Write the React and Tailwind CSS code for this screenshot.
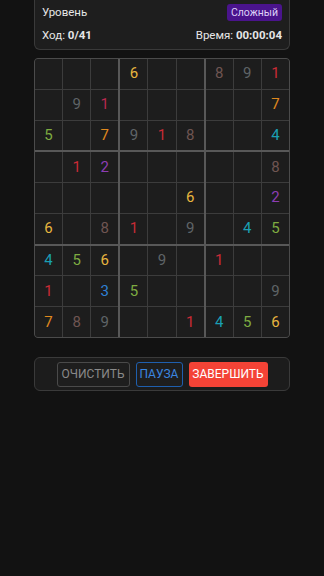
const C = {
  1: 'text-[#c92b36]',
  p: 'text-[#b8294f]',
  2: 'text-[#8d3db3]',
  3: 'text-[#2f80d4]',
  4: 'text-[#1a9fb3]',
  5: 'text-[#7eab41]',
  6: 'text-[#e7b53f]',
  7: 'text-[#e0891d]',
  8: 'text-[#6f5552]',
  9: 'text-[#5f6467]',
};

const board = [
  '000600891',
  '09p000007',
  '507918004',
  '012000008',
  '000006002',
  '608109045',
  '456090100',
  '103500009',
  '789001456',
];

function Cell({ ch }) {
  const v = ch === '0' ? '' : ch === 'p' ? '1' : ch;
  return (
    <div className="bg-[#1d1d1d] flex items-center justify-center">
      <span className={`text-[15px] leading-none ${C[ch] || ''}`}>{v}</span>
    </div>
  );
}

function Box({ br, bc }) {
  const cells = [];
  for (let r = 0; r < 3; r++) {
    for (let c = 0; c < 3; c++) {
      cells.push(<Cell key={r * 3 + c} ch={board[br * 3 + r][bc * 3 + c]} />);
    }
  }
  return <div className="grid grid-cols-3 grid-rows-3 gap-px bg-[#3c3c3c]">{cells}</div>;
}

export default function App() {
  const boxes = [];
  for (let br = 0; br < 3; br++) {
    for (let bc = 0; bc < 3; bc++) {
      boxes.push(<Box key={br * 3 + bc} br={br} bc={bc} />);
    }
  }
  return (
    <div
      className="w-[324px] h-[576px] bg-[#121212] flex flex-col items-center text-[#e6e6e6]"
      style={{ fontFamily: 'Roboto, "Noto Sans", sans-serif' }}
    >
      {/* Header */}
      <div className="w-[256px] h-[50px] bg-[#1e1e1e] border-x border-b border-[#3a3a3a] rounded-b-md px-[7px] flex flex-col justify-center gap-[6px] text-[11.5px]">
        <div className="flex items-center justify-between h-[17px]">
          <span>Уровень</span>
          <span className="bg-[#4a148c] text-[#ddd0f7] text-[10.5px] leading-[17px] h-[17px] px-[4px] rounded-[3px]">Сложный</span>
        </div>
        <div className="flex items-center justify-between">
          <span>
            Ход: <span className="font-bold">0/41</span>
          </span>
          <span>
            Время: <span className="font-bold">00:00:04</span>
          </span>
        </div>
      </div>

      {/* Board */}
      <div className="mt-[8px] w-[256px] h-[280px] border border-[#4b4b4b] rounded-[4px] bg-[#585858] grid grid-cols-3 grid-rows-3 gap-[2px] overflow-hidden">
        {boxes}
      </div>

      {/* Controls */}
      <div className="mt-[19px] w-[256px] h-[34px] bg-[#1c1c1c] border border-[#3a3a3a] rounded-md flex items-center justify-center gap-[6px] text-[12px]">
        <button className="h-[25px] w-[73px] border border-[#4a4a4a] rounded-[3px] text-[#8a8a8a] bg-[#1e1e1e]">ОЧИСТИТЬ</button>
        <button className="h-[25px] w-[47px] border border-[#1f5fae] rounded-[3px] text-[#3b86e0] bg-[#1e1e1e]">ПАУЗА</button>
        <button className="h-[25px] w-[79px] rounded-[3px] text-white bg-[#f44336]">ЗАВЕРШИТЬ</button>
      </div>
    </div>
  );
}
